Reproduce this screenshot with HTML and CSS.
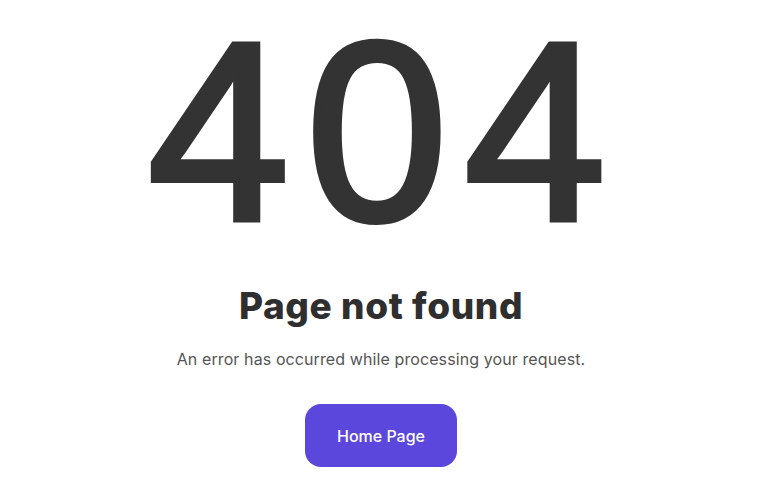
FILE: index.html
```html
<!DOCTYPE html>
<html lang="en">

<head>
    <meta charset="UTF-8">
    <meta name="viewport" content="width=device-width, initial-scale=1.0">
    <title>Page not found</title>
    <link rel="stylesheet" href="styles.css">
</head>

<body>
    <div class="container">
        <div class="error-code">404</div>
        <h1 class="error-title">Page not found</h1>
        <p class="error-text">An error has occurred while processing your request.</p>
        <a class="home-button" href="#">Home Page</a>
    </div>
</body>

</html>
```

FILE: styles.css
```css
body {
    margin: 0;
    font-family: Inter, "Noto Sans", sans-serif;
    background-color: #ffffff;
    color: #333333;
}

.container {
    display: flex;
    flex-direction: column;
    align-items: center;
    padding-top: 14px;
}

.error-code {
    font-family: "Liberation Sans", Arial, sans-serif;
    font-size: 254px;
    font-weight: 400;
    line-height: 236px;
    letter-spacing: 17px;
    margin-right: -9px;
    -webkit-text-stroke: 6px #333333;
    color: #333333;
}

.error-title {
    font-size: 37px;
    font-weight: 800;
    letter-spacing: 0.6px;
    margin: 34px 0 0;
    line-height: 44px;
    color: #2f2f2f;
}

.error-text {
    font-size: 16px;
    letter-spacing: 0.1px;
    color: #555555;
    margin: 19px 0 0;
    line-height: 24px;
}

.home-button {
    display: flex;
    align-items: center;
    justify-content: center;
    margin-top: 33px;
    width: 152px;
    height: 63px;
    border-radius: 16px;
    background-color: #5c47dc;
    color: #ffffff;
    font-size: 16px;
    font-weight: 500;
    text-decoration: none;
}
```
